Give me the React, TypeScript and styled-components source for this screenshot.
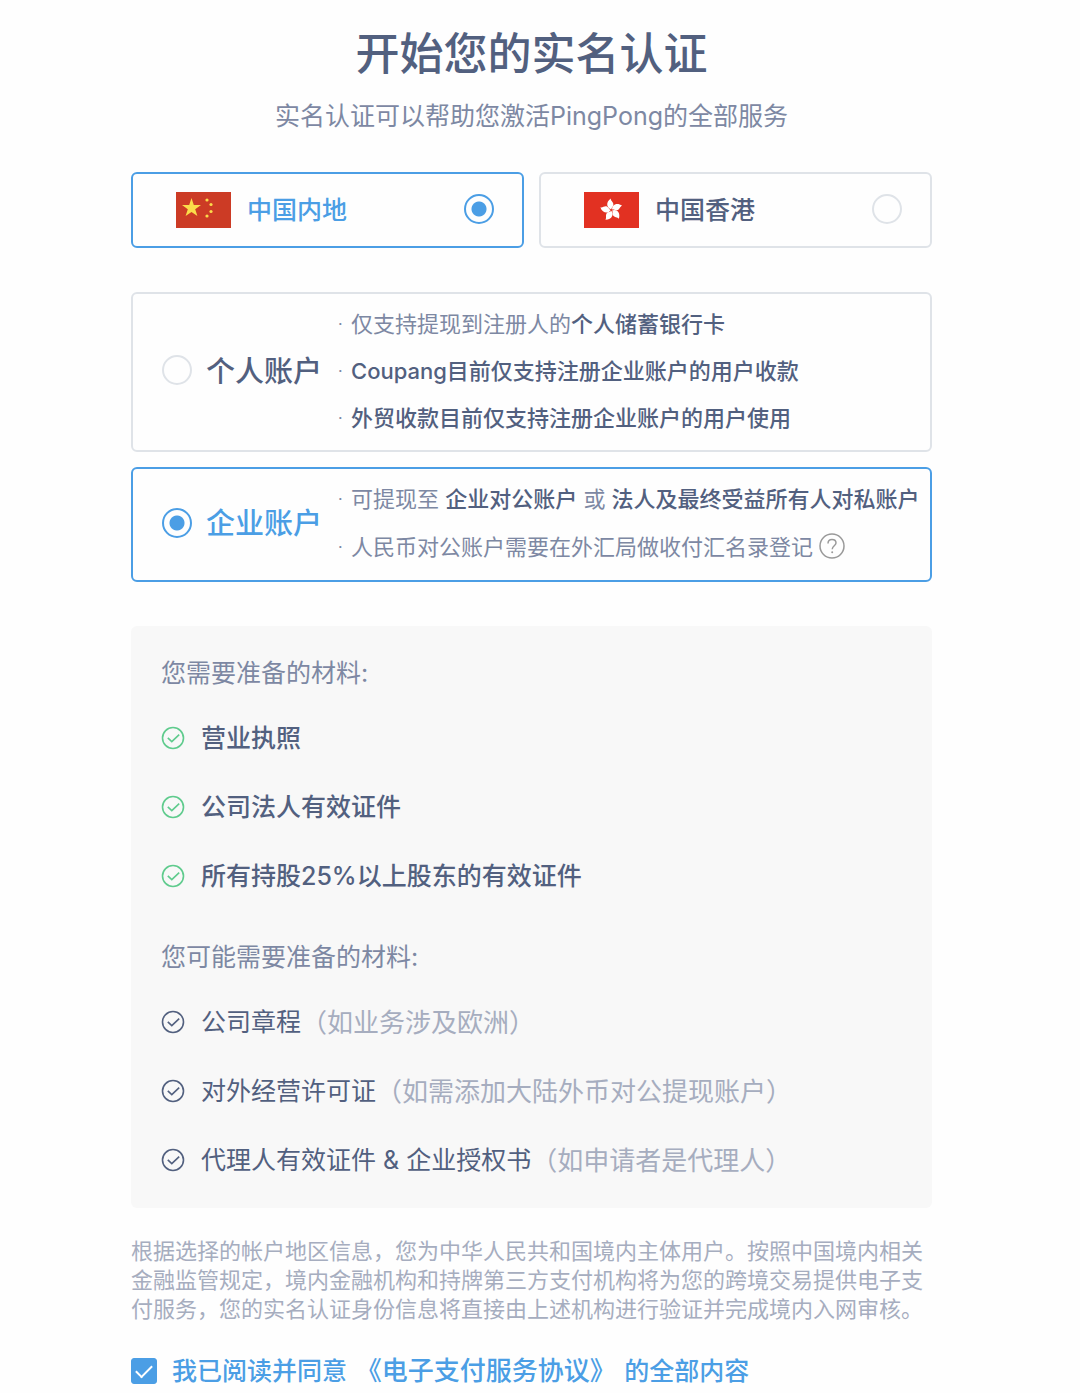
import { useState } from "react";
import type { ReactNode } from "react";
import styled, { createGlobalStyle } from "styled-components";

const color = {
  ink: "#52607f",
  muted: "#7d88a3",
  faint: "#a6adbf",
  blue: "#4b9ee5",
  line: "#dfe3e8",
  green: "#5fcb8d",
  panel: "#f8f8f8",
};

const GlobalStyle = createGlobalStyle`
  * {
    box-sizing: border-box;
  }

  body {
    margin: 0;
    background: #fefefe;
    color: ${color.ink};
    font-family: Inter, "Noto Sans CJK SC", sans-serif;
    font-size: 25px;
    -webkit-font-smoothing: antialiased;
  }
`;

const Page = styled.main`
  padding: 24px 148px 8px 131px;
`;

const Header = styled.header`
  display: flex;
  flex-direction: column;
  align-items: center;
  margin-bottom: 36px;
  text-align: center;
`;

const Title = styled.h1`
  margin: 0;
  font-size: 44px;
  font-weight: 500;
  line-height: 60px;
`;

const Subtitle = styled.p`
  margin: 12px 0 0;
  color: ${color.muted};
  font-size: 25px;
  line-height: 40px;
`;

const Group = styled.fieldset`
  min-width: 0;
  margin: 0 0 44px;
  padding: 0;
  border: 0;
`;

const RegionGroup = styled(Group)`
  display: grid;
  grid-template-columns: 1fr 1fr;
  gap: 15px;
`;

const AccountGroup = styled(Group)`
  display: grid;
  gap: 15px;
`;

const Card = styled.label<{ $active: boolean }>`
  display: flex;
  align-items: center;
  border: 2px solid ${(p) => (p.$active ? color.blue : color.line)};
  border-radius: 6px;
  cursor: pointer;
`;

const RegionCard = styled(Card)`
  gap: 16px;
  padding: 18px 28px 18px 43px;
`;

const AccountCard = styled(Card)`
  padding: 7px 0 8px 29px;
`;

const Radio = styled.input`
  appearance: none;
  flex: none;
  width: 30px;
  height: 30px;
  margin: 0 0 3px;
  border: 2px solid ${color.line};
  border-radius: 50%;
  cursor: pointer;

  &:checked {
    border-color: ${color.blue};
    background: radial-gradient(circle, ${color.blue} 7px, transparent 8px);
  }
`;

const Flag = styled.svg`
  flex: none;
  width: 55px;
  height: 36px;
`;

const RegionName = styled.span<{ $active: boolean }>`
  flex: 1;
  color: ${(p) => (p.$active ? color.blue : color.ink)};
  font-weight: 500;
  line-height: 36px;
`;

const AccountName = styled.span<{ $active: boolean }>`
  flex: none;
  width: 132px;
  margin-left: 14px;
  color: ${(p) => (p.$active ? color.blue : color.ink)};
  font-size: 29px;
  font-weight: 500;
  line-height: 40px;
`;

const Notes = styled.ul`
  flex: 1;
  margin: 0;
  padding: 0;
  color: ${color.muted};
  font-size: 22px;
  line-height: 47px;
  list-style: none;
  white-space: nowrap;
`;

const Note = styled.li`
  display: flex;
  align-items: center;

  &::before {
    content: "·";
    width: 13px;
    font-size: 16px;
  }
`;

const Strong = styled.strong`
  color: ${color.ink};
  font-weight: 500;
`;

const HelpButton = styled.button`
  display: flex;
  margin: 0 0 0 6px;
  padding: 10px 0 13px;
  border: 0;
  background: none;
  color: #999;
  cursor: pointer;
`;

const Panel = styled.section`
  padding: 16px 30px 13px;
  border-radius: 6px;
  background: ${color.panel};
`;

const PanelTitle = styled.h2`
  margin: 0;
  color: ${color.muted};
  font-size: 25px;
  font-weight: 400;
  line-height: 62px;
`;

const Materials = styled.ul`
  margin: 0;
  padding: 0;
  line-height: 69px;
  list-style: none;

  & + ${PanelTitle} {
    margin-top: 15px;
  }
`;

const Material = styled.li<{ $required?: boolean }>`
  display: flex;
  align-items: center;
  font-weight: ${(p) => (p.$required ? 500 : 400)};

  svg {
    flex: none;
    margin: 0 16px 2px 0;
    color: ${(p) => (p.$required ? color.green : color.ink)};
  }
`;

const Hint = styled.span`
  color: ${color.faint};
  font-size: 26px;
`;

const Legal = styled.p`
  margin: 29px 0 31px;
  color: ${color.faint};
  font-size: 22px;
  line-height: 29px;
`;

const Agreement = styled.div`
  display: flex;
  align-items: center;
  gap: 15px;
  color: ${color.blue};
  font-weight: 500;
  line-height: 32px;
`;

const Checkbox = styled.input`
  appearance: none;
  display: grid;
  place-items: center;
  flex: none;
  width: 26px;
  height: 26px;
  margin: 0;
  border: 1px solid ${color.blue};
  border-radius: 3px;
  cursor: pointer;

  &:checked {
    background: ${color.blue};
  }

  &:checked::before {
    content: "";
    width: 14px;
    height: 7px;
    margin-bottom: 4px;
    border: solid #fff;
    border-width: 0 0 2px 2px;
    transform: rotate(-45deg);
  }
`;

const AgreementLink = styled.a`
  padding: 0 2px;
  color: inherit;
  font-size: 26px;
  text-decoration: none;
`;

function ChinaFlag() {
  const star = "M0-10 2.3-3.1 9.5-3.1 3.7 1.2 5.9 8.1 0 3.9-5.9 8.1-3.7 1.2-9.5-3.1-2.3-3.1Z";
  return (
    <Flag viewBox="0 0 55 36" aria-hidden="true">
      <rect width="55" height="36" fill="#cc3b25" />
      <g fill="#fbdc4a">
        <path d={star} transform="translate(15.5 16)" />
        <circle cx="31" cy="8" r="1.6" />
        <circle cx="35" cy="12.5" r="1.6" />
        <circle cx="35" cy="19.5" r="1.6" />
        <circle cx="31" cy="24" r="1.6" />
      </g>
    </Flag>
  );
}

function HongKongFlag() {
  return (
    <Flag viewBox="0 0 55 36" aria-hidden="true">
      <rect width="55" height="36" fill="#e23122" />
      <g transform="translate(27.5 18)">
        {[-12, 60, 132, 204, 276].map((angle) => (
          <path
            key={angle}
            d="M0-.8C-4-2.4-4.8-8.4 1.6-11.4 1-9 3.8-7.4 2.9-4.6 2.3-2.8.7-3 0-.8Z"
            transform={`rotate(${angle})`}
            fill="#fff"
          />
        ))}
      </g>
    </Flag>
  );
}

function CheckCircle() {
  return (
    <svg width="24" height="24" viewBox="0 0 24 24" fill="none" stroke="currentColor" strokeWidth="1.6" aria-hidden="true">
      <circle cx="12" cy="12" r="10.5" />
      <path d="M6.8 11.8 10.8 15.6 18.2 8.6" />
    </svg>
  );
}

function HelpIcon() {
  return (
    <svg width="26" height="26" viewBox="0 0 26 26" fill="none" stroke="currentColor" strokeWidth="1.5" aria-hidden="true">
      <circle cx="13" cy="13" r="12" />
      <path d="M9 10.4C9 7.8 10.7 6.4 13 6.4S17 7.9 17 10C17 12.6 13.2 13 13.2 16.2" />
      <circle cx="13.2" cy="19.3" r="1" fill="currentColor" stroke="none" />
    </svg>
  );
}

type RegionProps = {
  name: string;
  flag: ReactNode;
  active: boolean;
  onSelect: () => void;
};

function RegionOption({ name, flag, active, onSelect }: RegionProps) {
  return (
    <RegionCard $active={active}>
      {flag}
      <RegionName $active={active}>{name}</RegionName>
      <Radio type="radio" name="region" checked={active} onChange={onSelect} />
    </RegionCard>
  );
}

type AccountProps = {
  id: string;
  name: string;
  active: boolean;
  onSelect: () => void;
  children: ReactNode;
};

function AccountOption({ id, name, active, onSelect, children }: AccountProps) {
  return (
    <AccountCard as="div" $active={active} onClick={onSelect}>
      <Radio id={id} type="radio" name="account" checked={active} onChange={onSelect} />
      <AccountName as="label" htmlFor={id} $active={active}>
        {name}
      </AccountName>
      <Notes>{children}</Notes>
    </AccountCard>
  );
}

const required = ["营业执照", "公司法人有效证件", "所有持股25%以上股东的有效证件"];

const optional = [
  { name: "公司章程", hint: "（如业务涉及欧洲）" },
  { name: "对外经营许可证", hint: "（如需添加大陆外币对公提现账户）" },
  { name: "代理人有效证件 & 企业授权书", hint: "（如申请者是代理人）" },
];

export default function App() {
  const [region, setRegion] = useState("mainland");
  const [account, setAccount] = useState("company");
  const [agreed, setAgreed] = useState(true);

  return (
    <>
      <GlobalStyle />
      <Page lang="zh-CN">
        <Header>
          <Title>开始您的实名认证</Title>
          <Subtitle>实名认证可以帮助您激活PingPong的全部服务</Subtitle>
        </Header>

        <RegionGroup aria-label="地区">
          <RegionOption
            name="中国内地"
            flag={<ChinaFlag />}
            active={region === "mainland"}
            onSelect={() => setRegion("mainland")}
          />
          <RegionOption
            name="中国香港"
            flag={<HongKongFlag />}
            active={region === "hongkong"}
            onSelect={() => setRegion("hongkong")}
          />
        </RegionGroup>

        <AccountGroup aria-label="账户类型">
          <AccountOption
            id="personal"
            name="个人账户"
            active={account === "personal"}
            onSelect={() => setAccount("personal")}
          >
            <Note>
              仅支持提现到注册人的<Strong>个人储蓄银行卡</Strong>
            </Note>
            <Note>
              <Strong>Coupang目前仅支持注册企业账户的用户收款</Strong>
            </Note>
            <Note>
              <Strong>外贸收款目前仅支持注册企业账户的用户使用</Strong>
            </Note>
          </AccountOption>
          <AccountOption
            id="company"
            name="企业账户"
            active={account === "company"}
            onSelect={() => setAccount("company")}
          >
            <Note>
              <span>
                可提现至 <Strong>企业对公账户</Strong> 或 <Strong>法人及最终受益所有人对私账户</Strong>
              </span>
            </Note>
            <Note>
              人民币对公账户需要在外汇局做收付汇名录登记
              <HelpButton type="button" aria-label="帮助">
                <HelpIcon />
              </HelpButton>
            </Note>
          </AccountOption>
        </AccountGroup>

        <Panel>
          <PanelTitle>您需要准备的材料:</PanelTitle>
          <Materials>
            {required.map((name) => (
              <Material key={name} $required>
                <CheckCircle />
                {name}
              </Material>
            ))}
          </Materials>
          <PanelTitle>您可能需要准备的材料:</PanelTitle>
          <Materials>
            {optional.map(({ name, hint }) => (
              <Material key={name}>
                <CheckCircle />
                {name}
                <Hint>{hint}</Hint>
              </Material>
            ))}
          </Materials>
        </Panel>

        <Legal>
          根据选择的帐户地区信息，您为中华人民共和国境内主体用户。按照中国境内相关金融监管规定，境内金融机构和持牌第三方支付机构将为您的跨境交易提供电子支付服务，您的实名认证身份信息将直接由上述机构进行验证并完成境内入网审核。
        </Legal>

        <Agreement>
          <Checkbox id="agree" type="checkbox" checked={agreed} onChange={(e) => setAgreed(e.target.checked)} />
          <label htmlFor="agree">
            我已阅读并同意 <AgreementLink href="#agreement">《电子支付服务协议》</AgreementLink> 的全部内容
          </label>
        </Agreement>
      </Page>
    </>
  );
}
